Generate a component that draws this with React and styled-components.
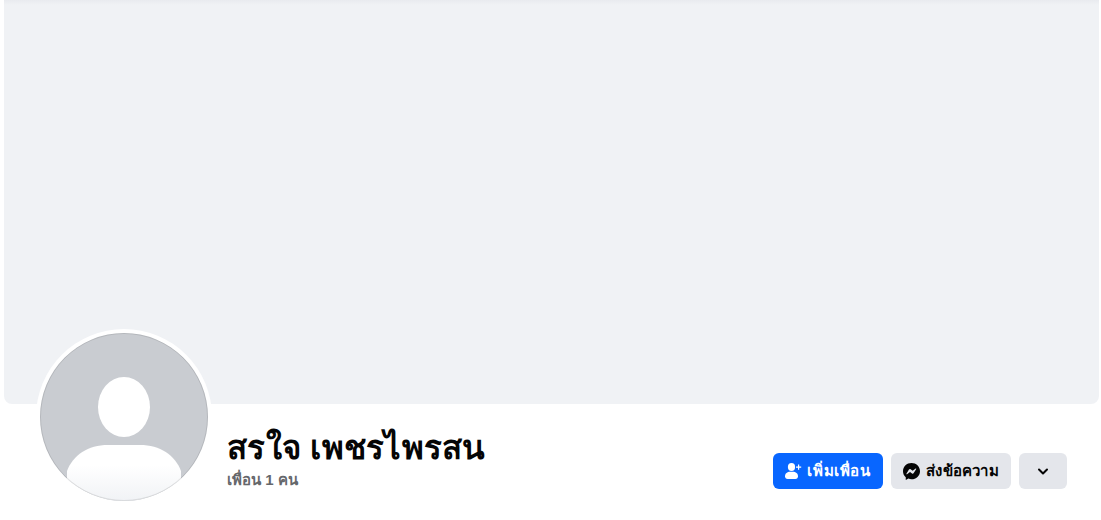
import React from 'react';
import styled, { createGlobalStyle } from 'styled-components';

const GlobalStyle = createGlobalStyle`
  html, body {
    margin: 0;
    padding: 0;
    background: #fff;
    font-family: "Liberation Sans", "Noto Sans", "DejaVu Sans", sans-serif;
  }
`;

const Page = styled.div`
  width: 1101px;
  height: 520px;
  overflow: hidden;
  background: #fff;
`;

const Cover = styled.div`
  height: 404px;
  margin: 0 2px 0 4px;
  background: linear-gradient(#e9ebef 0, #f0f2f5 5px);
  border-radius: 0 0 8px 8px;
`;

const Header = styled.div`
  display: flex;
  padding: 0 34px 0 36px;
`;

const AvatarRing = styled.div`
  width: 168px;
  height: 168px;
  margin-top: -75px;
  padding: 4px;
  flex: none;
  background: #fff;
  border-radius: 50%;
  position: relative;
`;

const AvatarSvg = styled.svg`
  display: block;
  width: 168px;
  height: 168px;
`;

const Info = styled.div`
  margin-left: 15px;
  padding-top: 25px;
  flex: 1;
`;

const Name = styled.h1`
  margin: 0;
  font-size: 33px;
  line-height: 38px;
  letter-spacing: 0.25px;
  font-weight: 700;
  color: #050505;
`;

const Friends = styled.div`
  margin-top: 4px;
  font-size: 15px;
  line-height: 18px;
  font-weight: 700;
  color: #65676b;
`;

const Actions = styled.div`
  display: flex;
  gap: 8px;
  padding-top: 49px;
`;

const Button = styled.button`
  display: flex;
  align-items: center;
  justify-content: center;
  gap: ${(p) => p.$gap || 5}px;
  width: ${(p) => p.$width}px;
  height: 36px;
  padding: 0;
  border: 0;
  border-radius: 6px;
  background: ${(p) => (p.$primary ? '#0866ff' : '#e4e6eb')};
  color: ${(p) => (p.$primary ? '#fff' : '#050505')};
  font-family: inherit;
  font-size: 15px;
  letter-spacing: ${(p) => p.$spacing || 0}px;
  font-weight: 700;
`;

const Avatar = () => (
  <AvatarSvg viewBox="0 0 168 168">
    <defs>
      <clipPath id="disc">
        <circle cx="84" cy="84" r="84" />
      </clipPath>
      <linearGradient id="body" x1="0" y1="0" x2="0" y2="1">
        <stop offset="0.35" stopColor="#fff" />
        <stop offset="1" stopColor="#f0f2f5" />
      </linearGradient>
    </defs>
    <circle cx="84" cy="84" r="84" fill="#c9ccd1" />
    <ellipse cx="84" cy="74" rx="26" ry="30" fill="#fff" />
    <path
      clipPath="url(#disc)"
      d="M27 138C33 122 48 112 68 112H100C120 112 135 122 141 138L141 170H27Z"
      fill="url(#body)"
    />
    <circle cx="84" cy="84" r="83.5" fill="none" stroke="#000" strokeOpacity="0.1" />
  </AvatarSvg>
);

const AddFriendIcon = () => (
  <svg width="17" height="16" viewBox="0 0 17 16" fill="#fff">
    <ellipse cx="6.5" cy="4" rx="3.6" ry="4" />
    <path d="M0 13.200C0 10.600 2.400 8.800 5 8.800H8C10.600 8.800 13 10.600 13 13.200C13 14.800 12 16 10.400 16H2.600C1 16 0 14.800 0 13.200Z" />
    <path d="M13 1.500h1.200v2h2v1.200h-2v2H13v-2h-2V3.500h2z" />
  </svg>
);

const MessengerIcon = () => (
  <svg width="17" height="17" viewBox="0 0 16 16">
    <path
      fill="#050505"
      d="M8 0C3.600 0 0 3.300 0 7.700C0 10 1 12 2.600 13.400V16L5.100 14.700C6 15 7 15.300 8 15.300C12.400 15.300 16 12 16 7.700C16 3.300 12.400 0 8 0Z"
    />
    <path fill="#e4e6eb" d="M3.200 10L5.600 6.200C6 5.600 6.700 5.500 7.200 5.900L9.100 7.300L11.900 5.200C12.300 4.900 12.700 5.300 12.500 5.700L10.100 9.500C9.700 10.100 9 10.200 8.500 9.800L6.600 8.400L3.800 10.500C3.400 10.800 3 10.400 3.200 10Z" />
  </svg>
);

const ChevronIcon = () => (
  <svg width="16" height="16" viewBox="0 0 16 16" fill="none" stroke="#050505" strokeWidth="2" strokeLinecap="round" strokeLinejoin="round">
    <path d="M4 6.500L8 10.500L12 6.500" />
  </svg>
);

export default function App() {
  return (
    <Page>
      <GlobalStyle />
      <Cover />
      <Header>
        <AvatarRing>
          <Avatar />
        </AvatarRing>
        <Info>
          <Name>สรใจ เพชรไพรสน</Name>
          <Friends>เพื่อน 1 คน</Friends>
        </Info>
        <Actions>
          <Button $primary $width={110} $spacing={0.6}>
            <AddFriendIcon />
            เพิ่มเพื่อน
          </Button>
          <Button $width={120} $spacing={0.2} $gap={6}>
            <MessengerIcon />
            ส่งข้อความ
          </Button>
          <Button $width={48}>
            <ChevronIcon />
          </Button>
        </Actions>
      </Header>
    </Page>
  );
}
